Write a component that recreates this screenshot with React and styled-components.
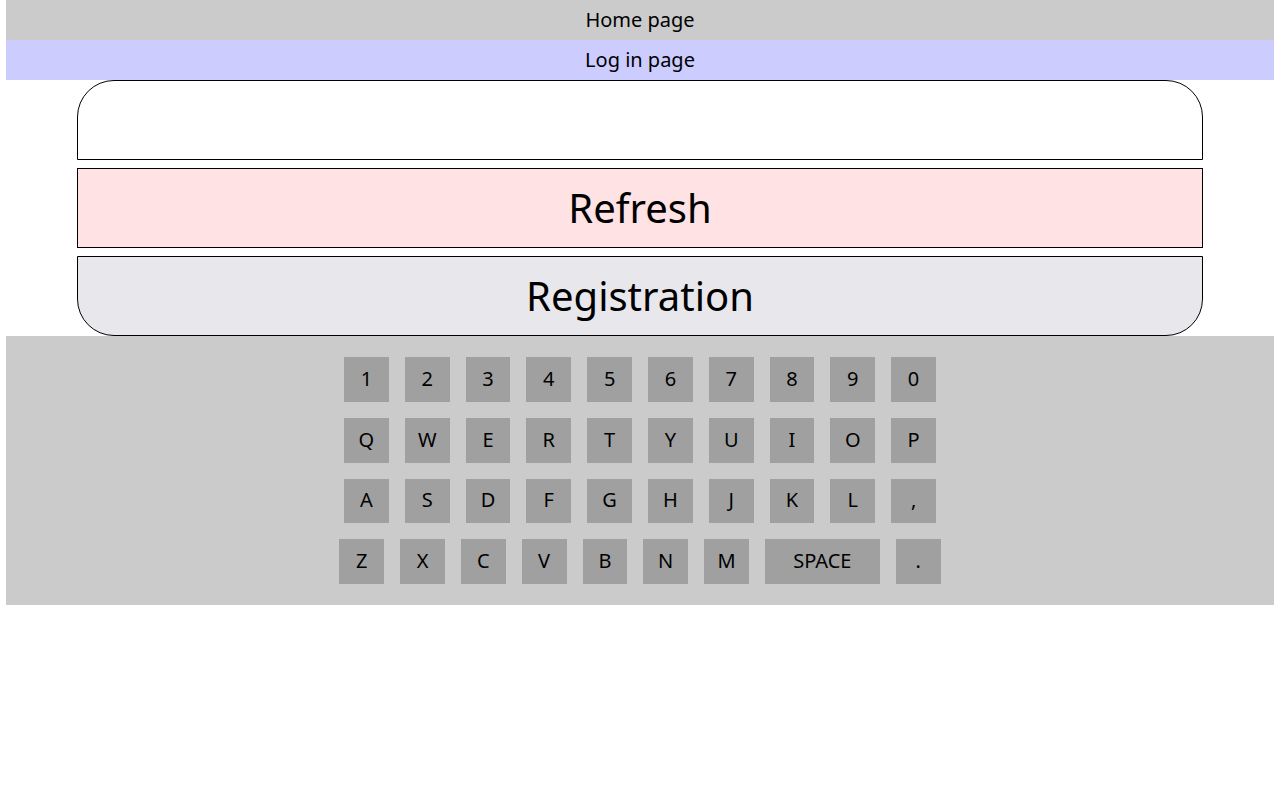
import React from "react";
import styled, { createGlobalStyle } from "styled-components";

const GlobalStyle = createGlobalStyle`
  body {
    margin: 0;
    background: #fff;
    font-family: "Noto Sans", "Open Sans", sans-serif;
    color: #000;
  }
`;

const Page = styled.div`
  width: 1268px;
  margin: 0 auto;
  display: flex;
  flex-direction: column;
`;

const NavBar = styled.div`
  box-sizing: border-box;
  height: 40px;
  padding-bottom: 2px;
  display: flex;
  align-items: center;
  justify-content: center;
  font-size: 20px;
  background: ${(p) => p.$bg};
`;

const Panel = styled.div`
  width: 1126px;
  margin: 0 auto;
  display: flex;
  flex-direction: column;
  gap: 8px;
`;

const Field = styled.div`
  box-sizing: border-box;
  height: 80px;
  border: 1px solid #000;
  border-radius: 37px 37px 0 0;
  background: #fff;
`;

const Action = styled.div`
  box-sizing: border-box;
  height: 80px;
  padding-bottom: 2px;
  border: 1px solid #000;
  border-radius: ${(p) => (p.$rounded ? "0 0 37px 37px" : "0")};
  background: ${(p) => p.$bg};
  display: flex;
  align-items: center;
  justify-content: center;
  font-size: 40px;
`;

const Keyboard = styled.div`
  background: #cbcbcb;
  padding: 21px 0;
  display: flex;
  flex-direction: column;
  align-items: center;
  gap: 16px;
`;

const KeyRow = styled.div`
  display: flex;
  gap: 16px;
`;

const Key = styled.div`
  box-sizing: border-box;
  width: ${(p) => (p.$wide ? "115px" : "44.8px")};
  height: 44.8px;
  padding-bottom: 2px;
  background: #a0a0a0;
  display: flex;
  align-items: center;
  justify-content: center;
  font-size: 20px;
`;

const rows = [
  ["1", "2", "3", "4", "5", "6", "7", "8", "9", "0"],
  ["Q", "W", "E", "R", "T", "Y", "U", "I", "O", "P"],
  ["A", "S", "D", "F", "G", "H", "J", "K", "L", ","],
  ["Z", "X", "C", "V", "B", "N", "M", "SPACE", "."],
];

export default function App() {
  return (
    <>
      <GlobalStyle />
      <Page>
        <NavBar $bg="#cbcbcb">Home page</NavBar>
        <NavBar $bg="#ccccff">Log in page</NavBar>
        <Panel>
          <Field />
          <Action $bg="#ffe2e4">Refresh</Action>
          <Action $bg="#e8e7ec" $rounded>
            Registration
          </Action>
        </Panel>
        <Keyboard>
          {rows.map((row, i) => (
            <KeyRow key={i}>
              {row.map((k) => (
                <Key key={k} $wide={k === "SPACE"}>
                  {k}
                </Key>
              ))}
            </KeyRow>
          ))}
        </Keyboard>
      </Page>
    </>
  );
}
